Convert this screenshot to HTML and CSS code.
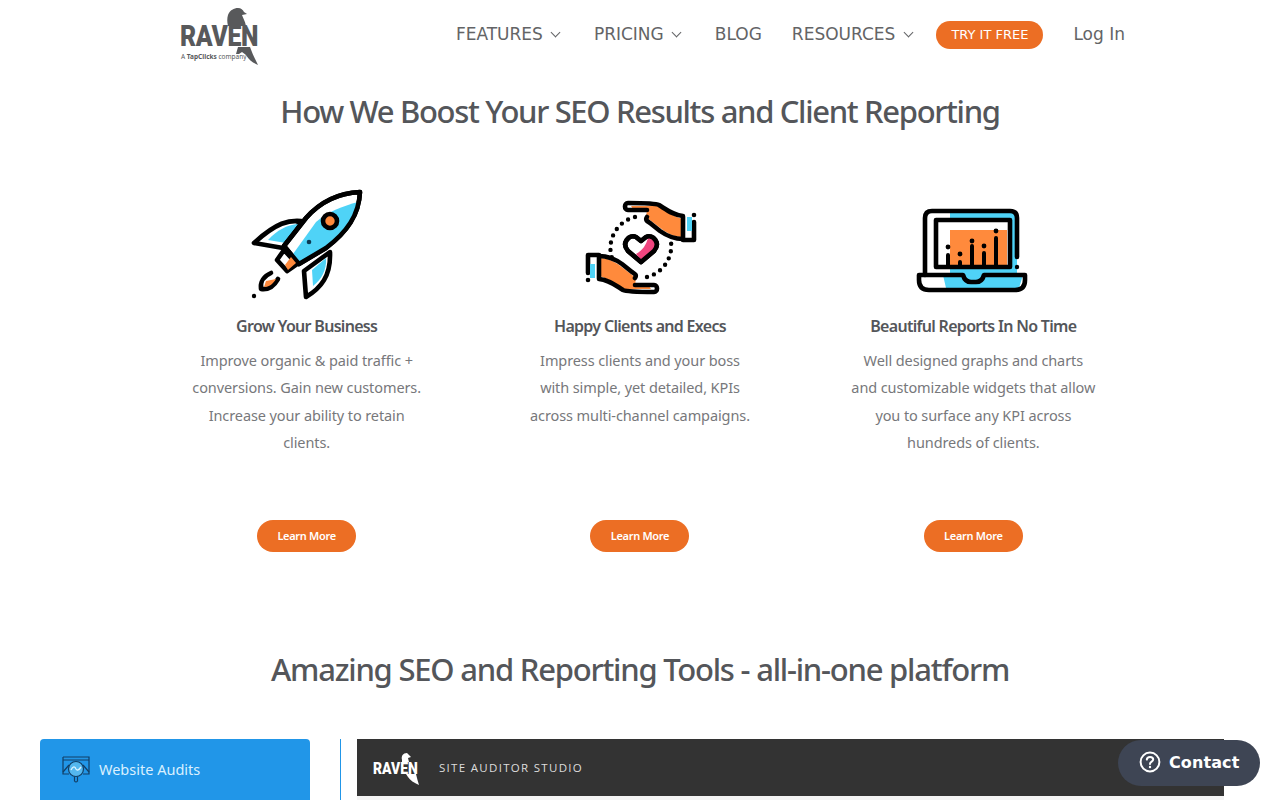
FILE: index.html
```html
<!DOCTYPE html>
<html lang="en">
<head>
  <meta charset="UTF-8" />
  <meta name="viewport" content="width=device-width, initial-scale=1" />
  <title>Raven Tools</title>
  <link rel="stylesheet" href="styles.css">
</head>
<body>

  <header class="site-header">
    <a class="logo" href="#">
      <svg class="logo-bird" viewBox="0 0 80 60" width="80" height="60" fill="#58595b">
        <path d="M48 7 C50 2 54 0 58 0 C61 0 63 2 64 4 L67 6 L62 7 C63 10 65 13 66 18 L48 18 C47 14 47 10 48 7Z"/>
        <path d="M58 39 L70 39 C72 45 75 51 78 57 C73 55 69 52 66 47 L62 44 L59 46 L56 46Z"/>
      </svg>
      <span class="logo-name">RAVEN</span>
      <span class="logo-sub">A <b>TapClicks</b> company</span>
    </a>
    <nav class="main-nav">
      <a href="#">FEATURES <i class="chev"></i></a>
      <a href="#">PRICING <i class="chev"></i></a>
      <a href="#">BLOG</a>
      <a href="#">RESOURCES <i class="chev"></i></a>
      <a class="try-btn" href="#">TRY IT FREE</a>
      <a class="login" href="#">Log In</a>
    </nav>
  </header>

  <h2 class="section-title first">How We Boost Your SEO Results and Client Reporting</h2>

  <section class="benefits">
    <div class="benefit">
      <svg class="benefit-icon" viewBox="1 0 130 125" width="130" height="125" fill="none" stroke="#000" stroke-width="4.6" stroke-linejoin="round" stroke-linecap="round">
        <path d="M60 41 C48 40 36 42 13 63 L42 68Z" fill="#fff"/>
        <path d="M57 44 C46 45 36 50 27 60 L45 63Z" fill="#4fd3f7" stroke="none"/>
        <path d="M63 91 L65 117 C80 108 90 96 89 72Z" fill="#fff"/>
        <path d="M71 90 L72 106 C80 100 86 90 85 78Z" fill="#4fd3f7" stroke="none"/>
        <path d="M119 12 C98 13 80 21 65 38 L43 66 L58 84 L85 68 C106 52 118 35 119 12Z" fill="#fff"/>
        <path d="M117 22 C102 26 86 32 75 42 L52 74 L58 82 L84 67 C103 52 114 40 117 22Z" fill="#4fd3f7" stroke="none"/>
        <path d="M119 12 C98 13 80 21 65 38 L43 66 L58 84 L85 68 C106 52 118 35 119 12Z"/>
        <path d="M43 70 L36 80 L46 91 L56 84Z" fill="#fff"/>
        <path d="M44 85 L50 77 L55 83 L47 90Z" fill="#ff8a3c" stroke="none"/>
        <circle cx="89" cy="41" r="7" fill="#ff8a3c"/>
        <path d="M30 93 C23 96 19 102 20 109 C27 110 33 106 37 99"/>
        <path d="M25 101 L35 99 C32 104 28 107 23 107Z" fill="#ff8a3c" stroke="none"/>
        <circle cx="68" cy="62" r="2.3" fill="#0b3a53" stroke="none"/>
        <circle cx="13" cy="116" r="2.2" fill="#000" stroke="none"/>
      </svg>
      <h3>Grow Your Business</h3>
      <p>Improve organic &amp; paid traffic +<br>conversions. Gain new customers.<br>Increase your ability to retain<br>clients.</p>
      <a class="learn-btn" href="#">Learn More</a>
    </div>
    <div class="benefit">
      <svg class="benefit-icon" viewBox="0 -10 130 125" width="130" height="125" fill="none" stroke="#000" stroke-width="4.6" stroke-linejoin="round" stroke-linecap="round">
        <defs>
          <g id="hand">
            <path d="M56 16 L82 16 C90 19 96 26 108 29 L108 47 C98 47 90 42 84 37 L71 27 L72 20 L58 19Z" fill="#ff8a3c" stroke="none"/>
            <path d="M108 26 C98 25 92 20 84 15 C80 13 70 13 53 13 C49 13 49 20 53 20 L72 20"/>
            <path d="M72 27 C70 30 72 31 75 33 L85 41 C92 46 100 49 108 49"/>
            <path d="M108 27 L108 50 L119 50 L119 32 M119 25 L119 25" />
            <path d="M112 27 L117 27 L117 41 L112 41Z" fill="#4fd3f7" stroke="none"/>
          </g>
        </defs>
        <use href="#hand"/>
        <use href="#hand" transform="rotate(180 66 57.5)"/>
        <path d="M60 27 A32 32 0 0 0 37 68" stroke-width="4.4" stroke-dasharray="0 7.4"/>
        <path d="M72 87 A32 32 0 0 0 96 52" stroke-width="4.4" stroke-dasharray="0 7.4"/>
        <path d="M66 72 L53 61 C46 53 54 44 61 47 L66 51 L71 47 C78 44 86 53 79 61Z" fill="#fff"/>
        <path d="M61 64 C68 60 71 55 73 48 C78 47 84 54 78 60 L66 70Z" fill="#f0457f" stroke="none"/>
        <path d="M66 72 L53 61 C46 53 54 44 61 47 L66 51 L71 47 C78 44 86 53 79 61Z"/>
      </svg>
      <h3>Happy Clients and Execs</h3>
      <p>Impress clients and your boss<br>with simple, yet detailed, KPIs<br>across multi-channel campaigns.</p>
      <a class="learn-btn" href="#">Learn More</a>
    </div>
    <div class="benefit">
      <svg class="benefit-icon" viewBox="3 -15 130 125" width="130" height="125" fill="none" stroke="#000" stroke-width="4.6" stroke-linejoin="round" stroke-linecap="round">
        <path d="M45 16 L108 16 Q112 16 112 20 L112 80 L118 80 L114 93 L41 93 L38 80 L45 80Z" fill="#4fd3f7" stroke="none"/>
        <rect x="31" y="25" width="74" height="47" fill="#fff" stroke="none"/>
        <rect x="45" y="35" width="57" height="36" fill="#ff8a3c" stroke="none"/>
        <path d="M105 72 L105 25 L31 25 L31 72Z"/>
        <path d="M20 80 L20 23 Q20 16 27 16 L105 16 Q112 16 112 23 L112 62"/>
        <path d="M14 80 L58 80 Q60 87 66 87 L71 87 Q77 87 79 80 L120 80 L120 85 Q120 95 110 95 L24 95 Q14 95 14 85Z"/>
        <path d="M43 70 L43 60 M55 70 L55 67 M67 70 L67 51 M79 70 L79 58 M91 70 L91 43" stroke-width="4"/>
        <g fill="#000" stroke="none">
          <circle cx="43" cy="52" r="2.4"/><circle cx="55" cy="59" r="2.4"/><circle cx="67" cy="46" r="2.4"/>
          <circle cx="79" cy="51" r="2.4"/><circle cx="91" cy="36" r="2.4"/><circle cx="112" cy="72" r="2.2"/>
        </g>
      </svg>
      <h3>Beautiful Reports In No Time</h3>
      <p>Well designed graphs and charts<br>and customizable widgets that allow<br>you to surface any KPI across<br>hundreds of clients.</p>
      <a class="learn-btn" href="#">Learn More</a>
    </div>
  </section>

  <h2 class="section-title second">Amazing SEO and Reporting Tools - all-in-one platform</h2>

  <section class="tools">
    <aside class="tool-list">
      <div class="tool-item">
        <svg viewBox="0 0 28 28" width="28" height="28" fill="none" stroke="#123f66" stroke-width="1.2">
          <path d="M1 2 H27 V19 H21 M7 19 H1 V2 M1 5 H27"/>
          <path d="M1 17 L7 10 M27 17 L21 10" />
          <circle cx="14" cy="14" r="7.5" fill="#54b7ee"/>
          <path d="M9 15 C11 11 13 11 14 14 C15 16 17 15 19 12" stroke="#d8f2ff" stroke-width="1.4"/>
          <path d="M12.5 21.5 V26 Q14 28 15.5 26 V21.5"/>
        </svg>
        <span>Website Audits</span>
      </div>
    </aside>
    <div class="tool-preview">
      <div class="preview-bar">
        <span class="mini-logo">
          <svg viewBox="0 0 46 36" width="46" height="36" fill="#fff">
            <path d="M29 10 C28 6 30 3 34 3 L38 7 L35 8 L36 12 L29 12Z"/>
            <path d="M33 24 L43 24 C44 28 45 32 46 35 C41 33 37 30 35 27Z"/>
          </svg>
          <b>RAVEN</b>
        </span>
        <span class="preview-title">SITE AUDITOR STUDIO</span>
      </div>
      <div class="preview-body"></div>
    </div>
  </section>

  <a class="contact-btn" href="#">
    <svg viewBox="0 0 22 22" width="22" height="22" fill="none" stroke="#fff" stroke-width="2">
      <circle cx="11" cy="11" r="9.4"/>
      <path d="M7.8 8.6 C8 6.6 9.5 6 11 6 C13 6 14.2 7.2 14.2 8.6 C14.2 10.8 11 10.6 11 13" stroke-linecap="round"/>
      <circle cx="11" cy="16" r="1.2" fill="#fff" stroke="none"/>
    </svg>
    <span>Contact</span>
  </a>

</body>
</html>
```

FILE: styles.css
```css
html, body {
  margin: 0;
  height: 800px;
  overflow: hidden;
}
body {
  font-family: "Noto Sans", Arial, sans-serif;
  background: #fff;
  color: #555;
}
a {
  text-decoration: none;
  color: inherit;
}

.site-header {
  display: flex;
  justify-content: space-between;
  align-items: center;
  height: 68px;
  padding: 0 155px 0 180px;
}
.logo {
  position: relative;
  display: block;
  width: 80px;
  height: 60px;
  margin-top: 8px;
  color: #58595b;
}
.logo-bird {
  position: absolute;
  left: 0;
  top: 0;
}
.logo-name {
  position: absolute;
  left: 0;
  top: 11px;
  font-family: "Roboto", sans-serif;
  font-weight: 900;
  font-size: 29px;
  line-height: 34px;
  letter-spacing: -0.4px;
  transform: scaleX(0.855);
  transform-origin: left center;
}
.logo-sub {
  position: absolute;
  left: 1px;
  top: 44px;
  font-size: 6.5px;
  line-height: 10px;
  white-space: nowrap;
}
.main-nav {
  display: flex;
  align-items: center;
  gap: 30px;
  font-family: "DejaVu Sans", sans-serif;
  font-size: 17px;
  color: #636466;
}
.chev {
  display: inline-block;
  box-sizing: border-box;
  width: 7px;
  height: 7px;
  margin: 0 4.6px 4px 4px;
  border-right: 1.4px solid #636466;
  border-bottom: 1.4px solid #636466;
  transform: rotate(45deg);
}
.try-btn {
  margin: 2px 0 0 -10px;
  background: #ec6e24;
  color: #fff;
  font-size: 13px;
  line-height: 28px;
  padding: 0 15px;
  border-radius: 14px;
}

.section-title {
  margin: 0;
  text-align: center;
  font-size: 31px;
  line-height: 44px;
  font-weight: 500;
  color: #54565a;
}
.section-title.first {
  margin-top: 21px;
  letter-spacing: -1.33px;
}
.section-title.second {
  margin-top: 95px;
  letter-spacing: -1.22px;
}

.benefits {
  display: grid;
  grid-template-columns: repeat(3, 1fr);
  width: 1000px;
  margin: 47px auto 0;
}
.benefit {
  display: flex;
  flex-direction: column;
  align-items: center;
  text-align: center;
  height: 372px;
}
.benefit h3 {
  margin: 9px 0 0;
  font-size: 16px;
  line-height: 24px;
  font-weight: 600;
  color: #54565a;
  letter-spacing: -0.7px;
}
.benefit p {
  margin: 9px 0 0;
  height: 110px;
  font-size: 14.5px;
  line-height: 27.4px;
  color: #77787b;
  letter-spacing: -0.1px;
}
.learn-btn {
  margin-top: 63px;
  width: 99px;
  line-height: 32px;
  border-radius: 16px;
  background: #ec6e24;
  color: #fff;
  font-size: 11px;
  font-weight: 600;
  letter-spacing: -0.3px;
}

.tools {
  display: flex;
  margin: 48px 56px 0 40px;
}
.tool-list {
  width: 270px;
  height: 200px;
  background: #2196e8;
  border-radius: 4px 4px 0 0;
}
.tool-item {
  display: flex;
  align-items: center;
  gap: 9px;
  padding: 16px 22px;
  color: #d9f0ff;
  font-size: 14.5px;
}
.tool-preview {
  flex: 1;
  margin-left: 30px;
  padding-left: 16px;
  border-left: 1px solid #2196e8;
}
.preview-bar {
  display: flex;
  align-items: center;
  height: 57px;
  padding-left: 16px;
  gap: 20px;
  background: #333;
}
.mini-logo {
  position: relative;
  width: 46px;
  height: 36px;
}
.mini-logo svg {
  position: absolute;
  left: 0;
  top: 0;
}
.mini-logo b {
  position: absolute;
  left: 0;
  top: 8px;
  font-family: "Roboto", sans-serif;
  font-weight: 900;
  font-size: 17px;
  line-height: 20px;
  color: #fff;
  transform: scaleX(0.82);
  transform-origin: left center;
}
.preview-title {
  font-family: "Open Sans", sans-serif;
  font-size: 11.5px;
  letter-spacing: 1.3px;
  color: #ddd;
}
.preview-body {
  height: 140px;
  background: #f4f4f4;
}

.contact-btn {
  position: fixed;
  right: 20px;
  top: 740px;
  display: flex;
  align-items: center;
  gap: 8px;
  height: 46px;
  width: 142px;
  box-sizing: border-box;
  padding: 0 0 2px 21px;
  border-radius: 23px;
  background: #3e4554;
  color: #fff;
  font-family: "DejaVu Sans", sans-serif;
  font-size: 16px;
  font-weight: 700;
  letter-spacing: 0.1px;
}
```
